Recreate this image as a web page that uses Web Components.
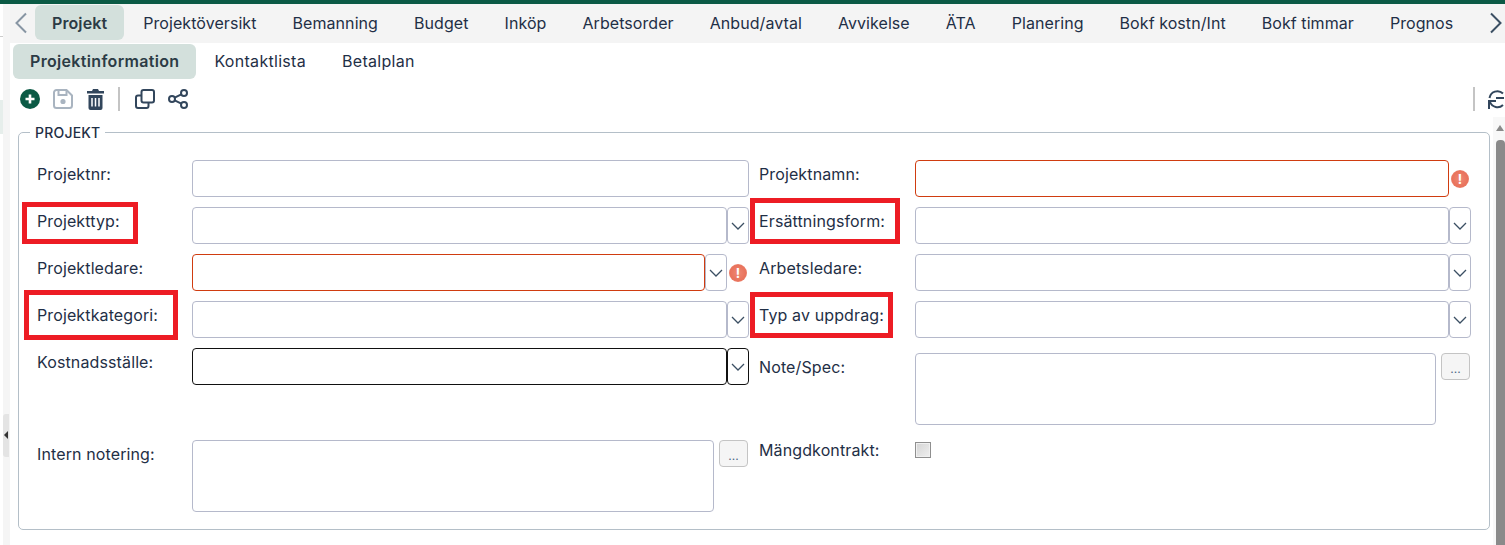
<!DOCTYPE html>
<html>
<head>
<meta charset="utf-8">
<style>
html, body { margin: 0; height: 100%; overflow: hidden; background: #fff; }
body { font-family: Inter, "Noto Sans", sans-serif; font-size: 16px; color: #1f2f46; }
</style>
</head>
<body>
<app-shell>
  <main-tabs>
    <tab-item active>Projekt</tab-item>
    <tab-item>Projektöversikt</tab-item>
    <tab-item>Bemanning</tab-item>
    <tab-item>Budget</tab-item>
    <tab-item>Inköp</tab-item>
    <tab-item>Arbetsorder</tab-item>
    <tab-item>Anbud/avtal</tab-item>
    <tab-item>Avvikelse</tab-item>
    <tab-item>ÄTA</tab-item>
    <tab-item>Planering</tab-item>
    <tab-item>Bokf kostn/Int</tab-item>
    <tab-item>Bokf timmar</tab-item>
    <tab-item>Prognos</tab-item>
  </main-tabs>
  <sub-tabs>
    <tab-item active sub>Projektinformation</tab-item>
    <tab-item sub>Kontaktlista</tab-item>
    <tab-item sub>Betalplan</tab-item>
  </sub-tabs>
  <tool-bar></tool-bar>
  <project-form></project-form>
  <red-mark slot="overlay" style="left:22px;top:198px;width:116px;height:42px"></red-mark>
  <red-mark slot="overlay" style="left:24px;top:286px;width:154px;height:50px"></red-mark>
  <red-mark slot="overlay" style="left:750px;top:194px;width:150px;height:46px"></red-mark>
  <red-mark slot="overlay" style="left:750px;top:288px;width:143px;height:46px"></red-mark>
</app-shell>

<script>
class AppShell extends HTMLElement {
  constructor() {
    super();
    this.attachShadow({ mode: "open" }).innerHTML = `
    <style>
      :host { display: block; height: 545px; box-sizing: border-box; border-top: 4px solid #0b5a45; position: relative; overflow: hidden; }
      .wrap { display: flex; height: 100%; }
      .side { width: 10px; flex: none; box-sizing: border-box; border-left: 3px solid #fff; background: #f5f5f5; position: relative; }
      .side .line { position: absolute; left: -3px; top: 32px; width: 3px; height: 1px; background: #ccc; }
      .side .tint { position: absolute; left: -3px; top: 96px; width: 3px; height: 34px; background: #e6eeeb; }
      .side .handle { position: absolute; left: 0; top: 410px; width: 6px; height: 43px; background: #e4e4e4; border-radius: 3px 0 0 3px; }
      .side .handle::after { content: ""; position: absolute; left: 1px; top: 17px; border: 4px solid transparent; border-right: 4px solid #333; border-left: 0; }
      .main { flex: 1; min-width: 0; }
      .bar { position: absolute; right: 0; top: 113px; bottom: 0; width: 12px; background: #f8f8f8; }
      .bar .up { position: absolute; right: 1px; top: 8px; border: 4px solid transparent; border-bottom: 6px solid #8a8a8a; border-top: 0; }
      .bar .thumb { position: absolute; left: 3px; right: 0; top: 23px; bottom: 0; background: #8a8a8a; border-radius: 4px 4px 0 0; }
    </style>
    <div class="wrap">
      <div class="side"><div class="line"></div><div class="tint"></div><div class="handle"></div></div>
      <div class="main"><slot></slot></div>
    </div>
    <div class="bar"><span class="up"></span><div class="thumb"></div></div>
    <slot name="overlay"></slot>`;
  }
}

class RedMark extends HTMLElement {
  constructor() {
    super();
    this.attachShadow({ mode: "open" }).innerHTML = `
    <style>
      :host { display: block; position: absolute; box-sizing: border-box; border: 5px solid #ed1c24; pointer-events: none; }
    </style>`;
  }
}

class TabItem extends HTMLElement {
  constructor() {
    super();
    this.attachShadow({ mode: "open" }).innerHTML = `
    <style>
      :host { display: block; flex: none; padding: 0 18px; height: 35px; line-height: 36px; border-radius: 6px; color: #1f2f46; font-size: 16px; letter-spacing: .07px; white-space: nowrap; }
      :host([active]) { padding: 0 17px; margin-right: 1px; background: #d3e0dc; font-weight: 600; color: #2c3b45; letter-spacing: .1px; }
      :host([sub]) { padding: 0 18px; line-height: 34px; letter-spacing: .3px; }
      :host([sub][active]) { padding: 0 17px; margin-right: 0; letter-spacing: .33px; }
    </style>
    <slot></slot>`;
  }
}

class MainTabs extends HTMLElement {
  constructor() {
    super();
    this.attachShadow({ mode: "open" }).innerHTML = `
    <style>
      :host { display: flex; align-items: flex-start; height: 39px; background: #f4f4f4; margin-left: -7px; padding: 1px 2px 0 0; box-sizing: border-box; overflow: hidden; }
      .nav { flex: none; height: 36px; display: flex; align-items: center; }
      .prev { width: 20px; padding-left: 12px; }
      .tabs { display: flex; flex: 1; min-width: 0; }
      svg { display: block; }
    </style>
    <div class="nav prev"><svg width="14" height="22" viewBox="0 0 14 22"><path d="M11 1.500 1.500 11l9.500 9.500" fill="none" stroke="#8795a3" stroke-width="2"/></svg></div>
    <div class="tabs"><slot></slot></div>
    <div class="nav"><svg width="14" height="22" viewBox="0 0 14 22"><path d="M2 1.500 11.500 11 2 20.500" fill="none" stroke="#3b4f63" stroke-width="2"/></svg></div>`;
  }
}

class SubTabs extends HTMLElement {
  constructor() {
    super();
    this.attachShadow({ mode: "open" }).innerHTML = `
    <style>
      :host { display: flex; height: 35px; padding-left: 3px; margin-top: 1px; }
    </style>
    <slot></slot>`;
  }
}

class ToolBar extends HTMLElement {
  constructor() {
    super();
    this.attachShadow({ mode: "open" }).innerHTML = `
    <style>
      :host { display: flex; align-items: center; height: 40px; padding: 0 1px 0 10px; box-sizing: border-box; }
      svg { display: block; flex: none; }
      .sep { width: 2px; height: 24px; background: #c4c4c4; flex: none; }
      .end { margin-left: auto; display: flex; align-items: center; gap: 13px; }
    </style>
    <svg style="margin-right:13px" width="20" height="20" viewBox="0 0 20 20"><circle cx="10" cy="10" r="10" fill="#0b5a45"/><path d="M10 5.500v9M5.500 10h9" stroke="#fff" stroke-width="2.600"/></svg>
    <svg style="margin-right:14px" width="20" height="20" viewBox="0 0 20 20" fill="none" stroke="#a9b4c0" stroke-width="2"><path d="M3.500 1h10l5.500 5.500v10a2.500 2.500 0 0 1-2.500 2.500h-13A2.500 2.500 0 0 1 1 16.500v-13A2.500 2.500 0 0 1 3.500 1z"/><path d="M5.500 1.500v4.500h8V1.500"/><circle cx="10" cy="12.500" r="1.600" fill="#a9b4c0"/></svg>
    <svg style="margin-right:14px" width="17" height="21" viewBox="0 0 17 21"><path d="M6 0h5l1 2h5v2.500H0V2h5z" fill="#32465c"/><path d="M1.500 6h14v13a2 2 0 0 1-2 2h-10a2 2 0 0 1-2-2z" fill="#32465c"/><path d="M5 9v8.500M8.500 9v8.500M12 9v8.500" stroke="#fff" stroke-width="1.500"/></svg>
    <div class="sep"></div>
    <svg style="margin:0 13px 0 15px" width="20" height="20" viewBox="0 0 20 20" fill="none" stroke="#32465c" stroke-width="2"><rect x="6.500" y="1" width="12.500" height="12.500" rx="2"/><path d="M6 6.500H3a2 2 0 0 0-2 2V17a2 2 0 0 0 2 2h8.500a2 2 0 0 0 2-2v-3"/></svg>
    <svg width="20" height="20" viewBox="0 0 20 20" fill="none" stroke="#32465c" stroke-width="2"><circle cx="4" cy="10" r="3"/><circle cx="16" cy="4" r="3"/><circle cx="16" cy="16" r="3"/><path d="M6.700 8.600l6.600-3.200M6.700 11.400l6.600 3.200"/></svg>
    <div class="end"><div class="sep"></div><svg width="16" height="20" viewBox="0 0 16 20" fill="none" stroke="#32465c" stroke-width="2"><path d="M1.500 9A8 8 0 0 1 15 4.500"/><path d="M8 9h8M0 12h8"/><path d="M1 12v8"/><path d="M2 13a8 8 0 0 0 13 3"/></svg></div>`;
  }
}

class FormField extends HTMLElement {
  constructor() {
    super();
    this.attachShadow({ mode: "open" });
  }
  connectedCallback() {
    const type = this.getAttribute("type") || "text";
    let control = `<div class="box"></div>`;
    if (type === "select") control = `<div class="box"></div><div class="arrow"><svg width="14" height="8" viewBox="0 0 14 8"><path d="M1 1l6 6 6-6" fill="none" stroke="#3b4f63" stroke-width="1.300"/></svg></div>`;
    if (type === "area") control = `<div class="box area"></div><div class="more">...</div>`;
    if (type === "check") control = `<div class="check"></div>`;
    const alert = this.hasAttribute("alert") ? `<div class="alert">!</div>` : "";
    this.shadowRoot.innerHTML = `
    <style>
      :host { display: flex; align-items: flex-start; color: #1f2f46; }
      .label { width: 156px; box-sizing: border-box; padding-left: var(--label-pad, 0); flex: none; font-size: 16px; line-height: 28px; letter-spacing: .12px; white-space: nowrap; }
      .control { flex: 1; min-width: 0; display: flex; align-items: flex-start; }
      .box { flex: 1; min-width: 0; height: 37px; box-sizing: border-box; border: 1px solid #b5b9cb; border-radius: 4px; background: #fff; }
      .area { height: 72px; }
      :host([required]) .box { border-color: #d03c10; }
      :host([focused]) .box, :host([focused]) .arrow { border-color: #111; }
      .arrow { width: 22px; height: 37px; flex: none; box-sizing: border-box; border: 1px solid #b5b9cb; border-radius: 4px; display: flex; align-items: center; justify-content: center; }
      .more { width: 29px; height: 27px; flex: none; box-sizing: border-box; margin: 0 1px 0 5px; border: 1px solid #c4c4c4; border-radius: 4px; background: #f5f5f5; font-size: 12px; line-height: 29px; text-align: center; color: #4d6a85; }
      .check { width: 16px; height: 16px; margin-top: 6px; box-sizing: border-box; border: 1px solid #8f8f8f; background: linear-gradient(135deg, #d4d4d4, #efefef); box-shadow: inset 0 0 0 1px #f0f0f0; }
      .alert { width: 18px; height: 18px; margin: 10px 2px 0 2px; flex: none; border-radius: 50%; background: radial-gradient(circle, #ee8874 0, #e9735c 60%, #f0a594 100%); color: #fff; font: bold 13px/18px Inter, sans-serif; text-align: center; }
    </style>
    <div class="label">${this.getAttribute("label")}</div>
    <div class="control">${control}${alert}</div>`;
  }
}

class ProjectForm extends HTMLElement {
  constructor() {
    super();
    this.attachShadow({ mode: "open" }).innerHTML = `
    <style>
      :host { display: block; margin: 5px 15px 0 8px; }
      fieldset { margin: 0; padding: 19px 0 0; height: 406px; box-sizing: border-box; border: 1px solid #b4bfc8; border-radius: 5px; }
      legend { margin-left: 11px; padding: 0 5px; font-size: 14px; line-height: 17px; font-weight: 500; letter-spacing: .2px; color: #1f2f46; }
      .cols { display: grid; grid-template-columns: 713px 712px; column-gap: 10px; padding-left: 17px; }
      .col { display: flex; flex-direction: column; }
      form-field { margin-bottom: 10px; }
    </style>
    <fieldset>
      <legend>PROJEKT</legend>
      <div class="cols">
        <div class="col" style="--label-pad:1px">
          <form-field label="Projektnr:"></form-field>
          <form-field label="Projekttyp:" type="select"></form-field>
          <form-field label="Projektledare:" type="select" required alert></form-field>
          <form-field label="Projektkategori:" type="select"></form-field>
          <form-field label="Kostnadsställe:" type="select" focused style="margin-bottom:55px"></form-field>
          <form-field label="Intern notering:" type="area"></form-field>
        </div>
        <div class="col">
          <form-field label="Projektnamn:" required alert></form-field>
          <form-field label="Ersättningsform:" type="select"></form-field>
          <form-field label="Arbetsledare:" type="select"></form-field>
          <form-field label="Typ av uppdrag:" type="select"></form-field>
          <form-field label="Note/Spec:" type="area" style="margin-top:5px;margin-bottom:11px"></form-field>
          <form-field label="Mängdkontrakt:" type="check"></form-field>
        </div>
      </div>
    </fieldset>`;
  }
}

customElements.define("app-shell", AppShell);
customElements.define("red-mark", RedMark);
customElements.define("tab-item", TabItem);
customElements.define("main-tabs", MainTabs);
customElements.define("sub-tabs", SubTabs);
customElements.define("tool-bar", ToolBar);
customElements.define("form-field", FormField);
customElements.define("project-form", ProjectForm);
</script>
</body>
</html>
